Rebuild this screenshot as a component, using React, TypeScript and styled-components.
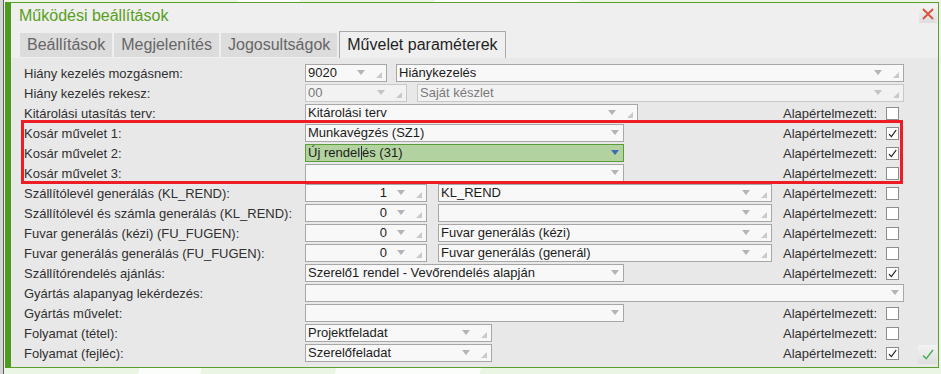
import styled, { createGlobalStyle } from "styled-components";

type Tone = "normal" | "disabled" | "active";

const GlobalStyle = createGlobalStyle`
  html, body {
    margin: 0;
    padding: 0;
  }
  body {
    width: 941px;
    height: 374px;
    overflow: hidden;
    font-family: "Liberation Sans", Arial, sans-serif;
    background: #ebf5e5;
  }
`;

const Page = styled.div`
  display: flex;
  height: 374px;
  background: linear-gradient(
    105deg,
    #eaf5e3 0 230px,
    #fbfdfa 230px 290px,
    #eaf5e3 290px 420px,
    #fbfdfa 420px 560px,
    #eaf5e3 560px
  );
`;

const Rail = styled.div`
  flex-shrink: 0;
  width: 3px;
  background: #d5d5d5;
  border-right: 1px solid #5f5f5f;
`;

const Dialog = styled.section`
  position: relative;
  flex: 1;
  display: flex;
  flex-direction: column;
  box-sizing: border-box;
  height: 366px;
  margin: 2px 2px 0 1px;
  border: 1px solid #5ba02c;
  border-left: 6px solid #4e9a1f;
  background: #e8e8e8;
`;

const Head = styled.header`
  background: #efefef;
`;

const TitleBar = styled.div`
  display: flex;
  align-items: flex-start;
  height: 26px;
  padding-left: 8px;
`;

const Title = styled.h1`
  flex: 1;
  margin: 0;
  align-self: center;
  font-size: 16px;
  font-weight: normal;
  color: #58a01b;
`;

const IconButton = styled.button`
  display: flex;
  align-items: center;
  justify-content: center;
  width: 18px;
  height: 18px;
  padding: 0;
  border: none;
  background: linear-gradient(#f3f3f3, #dedede);
`;

const CloseButton = styled(IconButton)`
  margin: 2px 1px 0 0;
`;

const OkButton = styled(IconButton)`
  position: absolute;
  right: 1px;
  bottom: 3px;
  width: 19px;
  height: 19px;
`;

const TabRow = styled.nav`
  display: flex;
  align-items: flex-end;
  gap: 2px;
  height: 29px;
  padding-left: 9px;
`;

const Tab = styled.div<{ $active?: boolean }>`
  display: flex;
  align-items: center;
  box-sizing: border-box;
  height: ${(p) => (p.$active ? 27 : 24)}px;
  margin-bottom: ${(p) => (p.$active ? 0 : 1)}px;
  padding: 0 ${(p) => (p.$active ? 7 : 7)}px;
  font-size: 16px;
  color: ${(p) => (p.$active ? "#1f1f1f" : "#666")};
  background: ${(p) => (p.$active ? "#efefef" : "#dcdcdc")};
  border: ${(p) => (p.$active ? "1px solid #a9a9a9" : "none")};
  border-bottom: none;
`;

const Body = styled.div`
  flex: 1;
  display: flex;
  flex-direction: column;
  width: 880px;
  padding: 5px 0 0 13px;
`;

const Row = styled.div`
  display: flex;
  align-items: center;
  height: 20px;
  font-size: 13px;
  color: #303030;
`;

const Label = styled.span`
  flex-shrink: 0;
  width: 281px;
  white-space: nowrap;
`;

const Marked = styled.div`
  position: relative;

  &::after {
    content: "";
    position: absolute;
    top: -3px;
    bottom: -1px;
    left: -3px;
    right: 1px;
    border: 3px solid #ee1c24;
    pointer-events: none;
  }
`;

const Box = styled.div<{ $w: number; $gap?: number; $tone: Tone }>`
  display: flex;
  align-items: center;
  flex-shrink: 0;
  box-sizing: border-box;
  width: ${(p) => p.$w}px;
  height: 18px;
  margin-left: ${(p) => p.$gap ?? 0}px;
  padding: 0 4px 0 2px;
  border: 1px solid
    ${(p) =>
      p.$tone === "active" ? "#5a9e39" : p.$tone === "disabled" ? "#c8c8c8" : "#a7a7a7"};
  background: ${(p) =>
    p.$tone === "active" ? "#b2d29f" : p.$tone === "disabled" ? "#f2f2f2" : "#f8f8f8"};
  color: ${(p) => (p.$tone === "disabled" ? "#7a7a7a" : "#1c1c1c")};
`;

const Value = styled.span<{ $right?: boolean }>`
  flex: 1;
  min-width: 0;
  overflow: hidden;
  white-space: nowrap;
  line-height: 16px;
  text-align: ${(p) => (p.$right ? "right" : "left")};
`;

const Caret = styled.span`
  display: inline-block;
  width: 1px;
  height: 14px;
  margin: 0 0 0 1px;
  vertical-align: -3px;
  background: #1d2b5c;
`;

const Drop = styled.svg`
  flex-shrink: 0;
  margin: -2px 0 0 10px;
`;

const Grip = styled.svg`
  flex-shrink: 0;
  margin: 4px 0 0 11px;
`;

const FlagWrap = styled.label`
  display: flex;
  align-items: center;
  gap: 9px;
  margin-left: auto;
  padding-right: 5px;
`;

const CheckBox = styled.span`
  display: flex;
  align-items: center;
  justify-content: center;
  box-sizing: border-box;
  width: 13px;
  height: 13px;
  border: 1px solid #8d8d8d;
  background: #fff;
`;

interface FieldProps {
  w: number;
  gap?: number;
  value?: React.ReactNode;
  right?: boolean;
  tone?: Tone;
  grip?: boolean;
}

const Field = ({ w, gap, value, right, tone = "normal", grip = true }: FieldProps) => (
  <Box $w={w} $gap={gap} $tone={tone}>
    <Value $right={right}>{value}</Value>
    <Drop width="8" height="5" viewBox="0 0 8 5">
      <path d="M0 0H8L4 5Z" fill={tone === "active" ? "#3c6db3" : tone === "disabled" ? "#c4c4c4" : "#b4b4b4"} />
    </Drop>
    {grip && (
      <Grip width="6" height="6" viewBox="0 0 6 6">
        <path d="M6 0V6H0Z" fill="#c9c9c9" />
      </Grip>
    )}
  </Box>
);

const Flag = ({ checked }: { checked?: boolean }) => (
  <FlagWrap>
    <span>Alapértelmezett:</span>
    <CheckBox>
      {checked && (
        <svg width="9" height="9" viewBox="0 0 9 9">
          <path d="M1 5.2L3.4 7.6L8.2 1" fill="none" stroke="#1a1a1a" strokeWidth="1.2" />
        </svg>
      )}
    </CheckBox>
  </FlagWrap>
);

const App = () => {
  return (
    <Page>
      <GlobalStyle />
      <Rail />
      <Dialog>
        <Head>
          <TitleBar>
            <Title>Működési beállítások</Title>
            <CloseButton aria-label="Bezárás">
              <svg width="12" height="12" viewBox="0 0 12 12">
                <path d="M1 1L11 11M11 1L1 11" stroke="#d9503c" strokeWidth="1.8" />
              </svg>
            </CloseButton>
          </TitleBar>
          <TabRow>
            <Tab>Beállítások</Tab>
            <Tab>Megjelenítés</Tab>
            <Tab>Jogosultságok</Tab>
            <Tab $active>Művelet paraméterek</Tab>
          </TabRow>
        </Head>

        <Body>
          <Row>
            <Label>Hiány kezelés mozgásnem:</Label>
            <Field w={82} value="9020" />
            <Field w={508} gap={9} value="Hiánykezelés" />
          </Row>
          <Row>
            <Label>Hiány kezelés rekesz:</Label>
            <Field w={102} value="00" tone="disabled" />
            <Field w={487} gap={10} value="Saját készlet" tone="disabled" />
          </Row>
          <Row>
            <Label>Kitárolási utasítás terv:</Label>
            <Field w={333} value="Kitárolási terv" />
            <Flag />
          </Row>

          <Marked>
            <Row>
              <Label>Kosár művelet 1:</Label>
              <Field w={319} value="Munkavégzés (SZ1)" grip={false} />
              <Flag checked />
            </Row>
            <Row>
              <Label>Kosár művelet 2:</Label>
              <Field
                w={319}
                tone="active"
                grip={false}
                value={
                  <>
                    Új rendel
                    <Caret />
                    és (31)
                  </>
                }
              />
              <Flag checked />
            </Row>
            <Row>
              <Label>Kosár művelet 3:</Label>
              <Field w={319} grip={false} />
              <Flag />
            </Row>
          </Marked>

          <Row>
            <Label>Szállítólevél generálás (KL_REND):</Label>
            <Field w={122} value="1" right />
            <Field w={334} gap={11} value="KL_REND" />
            <Flag />
          </Row>
          <Row>
            <Label>Szállítólevél és számla generálás (KL_REND):</Label>
            <Field w={122} value="0" right />
            <Field w={334} gap={11} />
            <Flag />
          </Row>
          <Row>
            <Label>Fuvar generálás (kézi) (FU_FUGEN):</Label>
            <Field w={122} value="0" right />
            <Field w={334} gap={11} value="Fuvar generálás (kézi)" />
            <Flag />
          </Row>
          <Row>
            <Label>Fuvar generálás generálás (FU_FUGEN):</Label>
            <Field w={122} value="0" right />
            <Field w={334} gap={11} value="Fuvar generálás (generál)" />
            <Flag />
          </Row>
          <Row>
            <Label>Szállítórendelés ajánlás:</Label>
            <Field w={319} value="Szerelő1 rendel - Vevőrendelés alapján" grip={false} />
            <Flag checked />
          </Row>
          <Row>
            <Label>Gyártás alapanyag lekérdezés:</Label>
            <Field w={599} grip={false} />
          </Row>
          <Row>
            <Label>Gyártás művelet:</Label>
            <Field w={319} grip={false} />
            <Flag />
          </Row>
          <Row>
            <Label>Folyamat (tétel):</Label>
            <Field w={187} value="Projektfeladat" />
            <Flag />
          </Row>
          <Row>
            <Label>Folyamat (fejléc):</Label>
            <Field w={187} value="Szerelőfeladat" />
            <Flag checked />
          </Row>
        </Body>

        <OkButton aria-label="Mentés">
          <svg width="12" height="11" viewBox="0 0 12 11">
            <path d="M1 6.5L4.2 9.6L11 1" fill="none" stroke="#4cae5a" strokeWidth="1.5" />
          </svg>
        </OkButton>
      </Dialog>
    </Page>
  );
};

export default App;
